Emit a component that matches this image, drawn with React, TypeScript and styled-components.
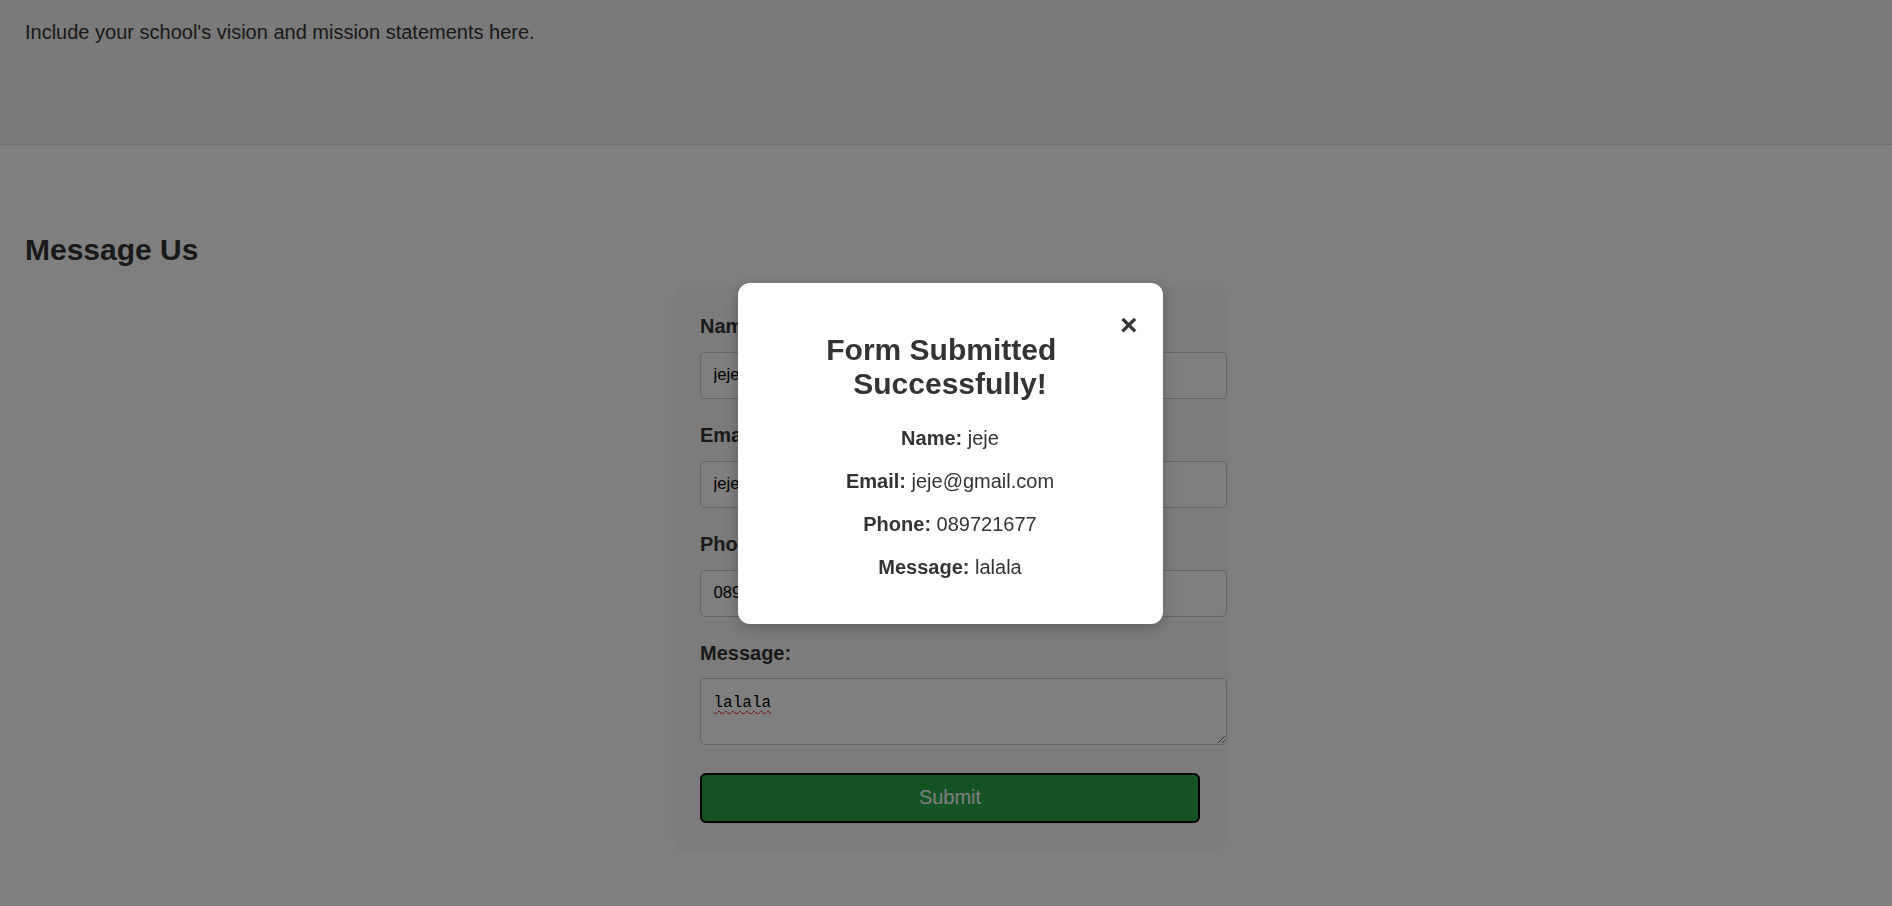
import React from "react";
import styled, { createGlobalStyle } from "styled-components";

const GlobalStyle = createGlobalStyle`
  html, body {
    margin: 0;
    padding: 0;
    background: #ffffff;
  }
  body {
    font-family: "Liberation Sans", Arial, sans-serif;
    font-size: 20px;
    color: #333333;
  }
  * {
    box-sizing: content-box;
  }
`;

const Page = styled.div`
  display: flex;
  flex-direction: column;
`;

const AboutSection = styled.section`
  background: #f4f4f4;
  border-bottom: 1px solid #dddddd;
  padding: 0 17px 80px 25px;
`;

const Paragraph = styled.p`
  margin: 21px 0 20px;
  line-height: 23px;
`;

const ContactSection = styled.section`
  padding: 88px 17px 40px 25px;
`;

const SectionTitle = styled.h2`
  font-size: 30px;
  font-weight: bold;
  margin: 0 0 22px;
  line-height: 34.5px;
  color: #333333;
`;

const FormCard = styled.form`
  width: 500px;
  margin: 0 auto;
  padding: 25px;
  background: #f9f9f9;
  border-radius: 12px;
  box-shadow: 0 0 8px rgba(0, 0, 0, 0.08);
`;

const FormGroup = styled.div<{ $gap?: number }>`
  margin-bottom: ${(p) => p.$gap ?? 25}px;
`;

const Label = styled.label<{ $gap?: number }>`
  display: block;
  font-weight: bold;
  line-height: 23px;
  margin-bottom: ${(p) => p.$gap ?? 14}px;
  color: #333333;
`;

const TextInput = styled.input`
  display: block;
  width: 100%;
  padding: 12.5px;
  border: 1px solid #cccccc;
  border-radius: 5px;
  font-family: "Liberation Sans", Arial, sans-serif;
  font-size: 16.67px;
  line-height: 20px;
  height: 20px;
  color: #000000;
  background: #ffffff;
  outline: none;
`;

const TextArea = styled.textarea`
  display: block;
  width: 100%;
  padding: 14.5px 12.5px 10.5px;
  border: 1px solid #cccccc;
  border-radius: 5px;
  font-family: "Liberation Mono", "DejaVu Sans Mono", monospace;
  font-size: 16px;
  line-height: 20px;
  height: 40px;
  color: #000000;
  background: #ffffff;
  outline: none;
  text-decoration: underline wavy #e02020;
  text-decoration-skip-ink: none;
  text-underline-offset: 3px;
  text-decoration-thickness: 1px;
`;

const SubmitButton = styled.button`
  display: flex;
  align-items: center;
  justify-content: center;
  box-sizing: border-box;
  width: 100%;
  height: 50px;
  padding: 0 10px;
  background: #28a745;
  color: #ffffff;
  border: 2.5px solid #000000;
  border-radius: 6px;
  font-family: "Liberation Sans", Arial, sans-serif;
  font-size: 20px;
  line-height: 23px;
  cursor: pointer;
`;

const Overlay = styled.div`
  position: fixed;
  inset: 0;
  background: rgba(0, 0, 0, 0.5);
  display: flex;
  align-items: center;
  justify-content: center;
  padding-left: 8px;
  box-sizing: border-box;
`;

const Modal = styled.div`
  width: 375px;
  padding: 25px;
  background: #ffffff;
  border-radius: 12px;
  box-shadow: 0 4px 16px rgba(0, 0, 0, 0.25);
  text-align: center;
  color: #333333;
`;

const CloseButton = styled.span`
  float: right;
  font-size: 30px;
  font-weight: bold;
  line-height: 34.5px;
  color: #333333;
  cursor: pointer;
`;

const ModalTitle = styled.h2`
  font-size: 30px;
  font-weight: bold;
  line-height: 34.5px;
  margin: 25px 0;
`;

const DetailLine = styled.p`
  margin: 20px 0;
  line-height: 23px;
`;

const Key = styled.strong`
  font-weight: bold;
`;

const details = [
  { key: "Name:", value: "jeje" },
  { key: "Email:", value: "jeje@gmail.com" },
  { key: "Phone:", value: "089721677" },
  { key: "Message:", value: "lalala" },
];

export default function App() {
  return (
    <>
      <GlobalStyle />
      <Page>
        <AboutSection>
          <Paragraph>Include your school's vision and mission statements here.</Paragraph>
        </AboutSection>
        <ContactSection>
          <SectionTitle>Message Us</SectionTitle>
          <FormCard onSubmit={(e) => e.preventDefault()}>
            <FormGroup>
              <Label htmlFor="name">Name:</Label>
              <TextInput id="name" type="text" defaultValue="jeje" />
            </FormGroup>
            <FormGroup>
              <Label htmlFor="email">Email:</Label>
              <TextInput id="email" type="email" defaultValue="jeje@gmail.com" />
            </FormGroup>
            <FormGroup>
              <Label htmlFor="phone">Phone:</Label>
              <TextInput id="phone" type="tel" defaultValue="089721677" />
            </FormGroup>
            <FormGroup $gap={28}>
              <Label htmlFor="message" $gap={13}>Message:</Label>
              <TextArea id="message" rows={2} defaultValue="lalala" />
            </FormGroup>
            <SubmitButton type="submit">Submit</SubmitButton>
          </FormCard>
        </ContactSection>
      </Page>
      <Overlay>
        <Modal>
          <CloseButton>&times;</CloseButton>
          <ModalTitle>Form Submitted Successfully!</ModalTitle>
          {details.map((d) => (
            <DetailLine key={d.key}>
              <Key>{d.key}</Key> {d.value}
            </DetailLine>
          ))}
        </Modal>
      </Overlay>
    </>
  );
}
